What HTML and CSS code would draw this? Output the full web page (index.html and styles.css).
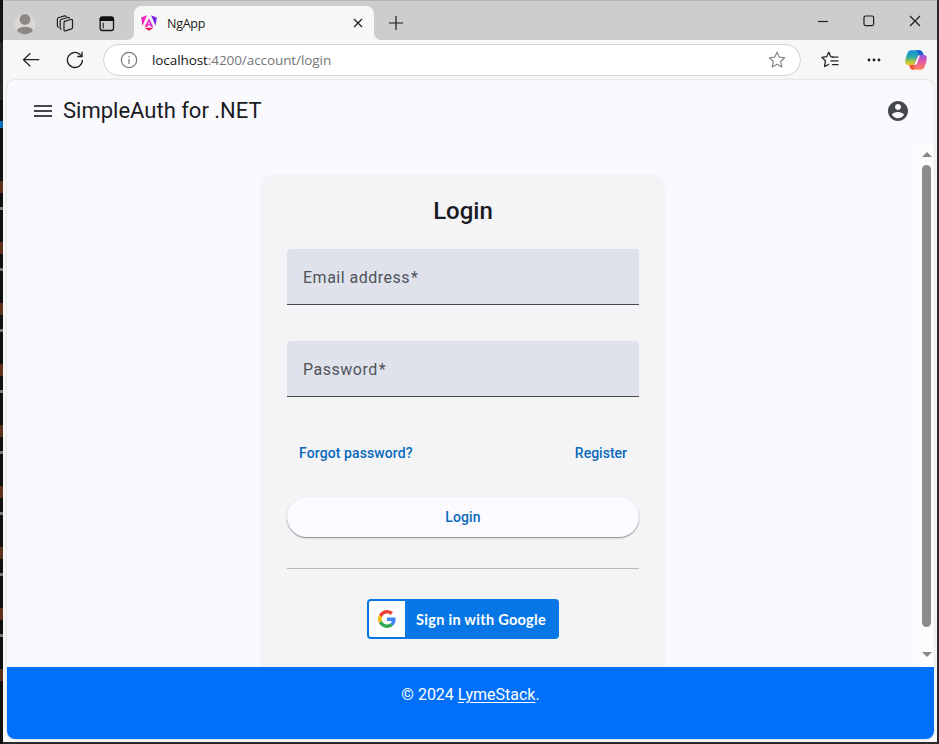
FILE: index.html
```html
<!DOCTYPE html>
<html lang="en">
<head>
<meta charset="utf-8">
<title>NgApp</title>
<link rel="stylesheet" href="styles.css">
</head>
<body>
<div class="backdrop">
<div class="edge" aria-hidden="true"></div>
<div class="window">
  <div class="titlebar">
    <div class="bar-left">
      <svg class="avatar" width="22" height="22" viewBox="0 0 22 22"><circle cx="11" cy="11" r="10.5" fill="#dad8d4"/><circle cx="11" cy="6.4" r="5.4" fill="#8c8783"/><path d="M3 17.5a8.3 5 0 0 1 16 0A10.5 10.5 0 0 1 3 17.5z" fill="#8c8783"/></svg>
      <svg class="spaces" width="18" height="18" viewBox="0 0 18 18" fill="none" stroke="#202020" stroke-width="1.2" stroke-linejoin="round" stroke-linecap="round"><path d="M8.200 6.400 15 4.500q1.500-.4 1.500 1v7q0 1-1 1.400l-6 2q-1.500.4-1.500-1V7.500q0-1 1-1.200zM5.200 14.200q-1-.3-1-1.300V5.800q0-1 1-1.300l6.500-2q1-.3 1.700.7M2.400 12.200q-1-.3-1-1.300V4q0-1 1-1.300L8.500.9q1-.3 1.600.5"/></svg>
      <svg class="tabs-icon" width="16" height="16" viewBox="0 0 16 16"><rect x="1.200" y="1.200" width="13.300" height="13.300" rx="2.200" fill="none" stroke="#161616" stroke-width="1.300"/><path d="M.6 5V3Q.6.600 3 .6h9.700q2.400 0 2.400 2.400v2z" fill="#111"/><path d="M4.300 6.800v5.700" stroke="#333" stroke-width="1.200"/></svg>
    </div>
    <div class="tab-slot"><div class="tab">
      <svg width="16" height="16" viewBox="0 0 16 16"><defs><linearGradient id="ng" x1="0" y1="0" x2="1" y2="0"><stop offset="0" stop-color="#f21667"/><stop offset=".4" stop-color="#ef24d8"/><stop offset="1" stop-color="#c034e4"/></linearGradient><linearGradient id="ngl" x1="0" y1="0" x2="0" y2="1"><stop offset="0" stop-color="#f52bd0"/><stop offset="1" stop-color="#f4129a"/></linearGradient></defs><path d="M.2 2.500 6 .2 1.400 10.800z" fill="url(#ngl)"/><path d="M10 .2l5.800 2.300-1.200 8.300z" fill="#7a26e8"/><path d="M8 3.600l4.300 8.100H9.600L9.200 10.500H6.800l-.4 1.200H3.700z" fill="url(#ng)"/><path d="M8 7l-.9 2.200h1.800z" fill="#f7f7f7"/><path d="M3.300 12.700h9.400L8 15.700z" fill="#f01059"/></svg>
      <span class="tab-title">NgApp</span>
      <svg class="tab-close" width="10" height="10" viewBox="0 0 10 10" stroke="#1c1c1c" stroke-width="1.200"><path d="M1 1l8 8M9 1 1 9"/></svg>
    </div></div>
    <div class="bar-right">
      <svg width="14" height="14" viewBox="0 0 14 14" stroke="#1c1c1c" stroke-width="1.200"><path d="M7 0v14M0 7h14"/></svg>
      <div class="controls">
        <svg width="12" height="12" viewBox="0 0 12 12" stroke="#1c1c1c" stroke-width="1.200"><path d="M1 6.500h10"/></svg>
        <svg width="12" height="12" viewBox="0 0 12 12" fill="none" stroke="#1c1c1c" stroke-width="1.200"><rect x="1" y="1" width="9.600" height="9.600" rx="1.500"/></svg>
        <svg width="12" height="12" viewBox="0 0 12 12" stroke="#1c1c1c" stroke-width="1.200"><path d="M1 1l10 10M11 1 1 11"/></svg>
      </div>
    </div>
  </div>
  <div class="toolbar">
    <svg class="back" width="18" height="16" viewBox="0 0 18 16" fill="none" stroke="#1d1d1d" stroke-width="1.200"><path d="M17.200 7.700H1.500M8.300 1.200 1.500 7.700l6.800 6.600"/></svg>
    <svg class="reload" width="18" height="18" viewBox="0 0 18 18" fill="none" stroke="#1d1d1d" stroke-width="1.300"><path d="M16.400 9A7.500 7.500 0 1 1 13.900 3.400L16 5.400"/><path d="M16 .8v4.700h-4.700"/></svg>
    <div class="address">
      <svg width="18" height="18" viewBox="0 0 18 18" fill="none" stroke="#777" stroke-width="1.200"><circle cx="9" cy="9" r="7.700"/><path d="M9 8v5M9 5v1.500"/></svg>
      <span class="url"><b>localhost</b>:4200/account/login</span>
      <svg class="star" width="18" height="18" viewBox="0 0 18 18" fill="none" stroke="#858585" stroke-width="1.200" stroke-linejoin="round"><path d="M9 1.200l2.300 5 5.400.6-4 3.700 1.100 5.400L9 13.200l-4.800 2.700 1.100-5.400-4-3.700 5.400-.6z"/></svg>
    </div>
    <svg class="favorites" width="18" height="18" viewBox="0 0 18 18" fill="none" stroke="#222" stroke-width="1.300" stroke-linejoin="round" stroke-linecap="round"><path d="M11.500 6 9.900 5.700 7.800 1.300 5.700 5.700.9 6.400l3.500 3.400-.8 5.700 4-2"/><path d="M11.500 6.100H17M10 9.900h7M11.500 13.700H17"/></svg>
    <svg class="dots" width="14" height="4" viewBox="0 0 14 4" fill="#1c1c1c"><circle cx="2" cy="2" r="1.400"/><circle cx="7" cy="2" r="1.400"/><circle cx="12" cy="2" r="1.400"/></svg>
    <svg class="copilot" width="22" height="20" viewBox="0 0 22 20"><defs><linearGradient id="ca" x1="0" y1="0" x2="0" y2="1"><stop offset="0" stop-color="#168ce0"/><stop offset=".45" stop-color="#25aaa7"/><stop offset=".75" stop-color="#a6c543"/><stop offset="1" stop-color="#f4c52c"/></linearGradient><linearGradient id="cb" x1="0" y1="0" x2="0" y2="1"><stop offset="0" stop-color="#9c50e8"/><stop offset=".5" stop-color="#e75c9b"/><stop offset="1" stop-color="#ff8555"/></linearGradient></defs><path d="M6 .2h8.500q2.500 0 3.300 2.800L18.500 5h-3.300q-2 0-2.800 2.500L10.600 13Q10 15 8 15H3Q0 15 .2 11.500C.5 8 2 4 3 2Q4 .2 6 .2z" fill="url(#ca)"/><path d="M16 19.800H7.500Q5.500 19.800 4.800 17L4.200 15h3q2.200 0 3-2.500L12 7q.7-2 2.600-2H19q3 0 2.800 3.500C21.500 12 20 16 19 18q-1 1.800-3 1.800z" fill="url(#cb)"/><path d="M11.500.2h3q2.500 0 3.300 2.800l.7 2h-3.300q-1.600 0-2.400-1.800z" fill="#1660ca"/><path d="M4.200 15h3q1.700 0 2.600 2l-1.500 2.800q-2.700.2-3.500-2.800z" fill="#ef5736"/><path d="M12.600 7.200q.7-2 2.400-2l-3 8.200q-.7 1.700-2.700 1.700z" fill="#fff"/></svg>
  </div>
  <div class="page">
    <header class="app-header">
      <svg width="18" height="12" viewBox="0 0 18 12" fill="#44474e"><path d="M0 0h18v2H0zM0 5h18v2H0zM0 10h18v2H0z"/></svg>
      <span class="brand">SimpleAuth for .NET</span>
      <svg class="account" width="24" height="24" viewBox="0 0 24 24" fill="#44474e"><path d="M12 2C6.480 2 2 6.480 2 12s4.480 10 10 10 10-4.480 10-10S17.520 2 12 2zm0 3c1.660 0 3 1.340 3 3s-1.340 3-3 3-3-1.340-3-3 1.340-3 3-3zm0 14.200c-2.500 0-4.710-1.280-6-3.220.03-1.990 4-3.080 6-3.080 1.990 0 5.970 1.090 6 3.080-1.290 1.940-3.500 3.220-6 3.220z"/></svg>
    </header>
    <div class="scroll-row">
      <main class="content">
        <form class="card">
          <h1>Login</h1>
          <div class="field">Email address<span>*</span></div>
          <div class="field">Password<span>*</span></div>
          <div class="links"><a class="forgot">Forgot password?</a><a>Register</a></div>
          <div class="submit">Login</div>
          <div class="divider"></div>
          <div class="google">
            <span class="google-logo"><svg width="18" height="18" viewBox="0 0 48 48"><path fill="#EA4335" d="M24 9.500c3.540 0 6.710 1.220 9.210 3.600l6.850-6.850C35.900 2.380 30.470 0 24 0 14.620 0 6.510 5.380 2.560 13.220l7.980 6.190C12.430 13.720 17.740 9.500 24 9.500z"/><path fill="#4285F4" d="M46.980 24.550c0-1.570-.15-3.090-.38-4.550H24v9.020h12.940c-.58 2.960-2.260 5.480-4.780 7.180l7.730 6c4.510-4.180 7.090-10.360 7.090-17.650z"/><path fill="#FBBC05" d="M10.530 28.590c-.48-1.450-.76-2.990-.76-4.590s.27-3.140.76-4.590l-7.980-6.190C.92 16.460 0 20.120 0 24c0 3.880.92 7.540 2.560 10.780l7.970-6.190z"/><path fill="#34A853" d="M24 48c6.480 0 11.930-2.130 15.890-5.810l-7.730-6c-2.150 1.450-4.920 2.300-8.160 2.300-6.260 0-11.570-4.220-13.470-9.910l-7.980 6.190C6.510 42.620 14.620 48 24 48z"/></svg></span>
            <span class="google-text">Sign in with Google</span>
          </div>
        </form>
      </main>
      <div class="scrollbar"><i class="up"></i><i class="thumb"></i><i class="down"></i></div>
    </div>
    <footer class="footer">© 2024&nbsp;<u>LymeStack</u>.</footer>
  </div>
</div>
</div>
</body>
</html>
```
FILE: styles.css
```css
* { box-sizing: border-box; }
body { margin: 0; font-family: Roboto, sans-serif; overflow: hidden; }
svg { display: block; flex: none; }
.backdrop { width: 939px; height: 744px; display: flex; background: #29292b; }
.edge {
  width: 3px;
  background:
    linear-gradient(#0e6dbd, #0e6dbd) 0 121px / 3px 7px no-repeat,
    linear-gradient(#252525, #252525) 0 42px / 3px 58px no-repeat,
    repeating-linear-gradient(#111 0 14px, #5e301b 14px 26px, #111 26px 40px, #777b80 40px 43px, #111 43px 61px) 0 167px / 3px 520px no-repeat,
    #111;
}
.window { width: 934px; height: 742px; display: flex; flex-direction: column; background: #f7f7f7; }

.titlebar { height: 40px; display: flex; border-top: 1px solid #b5b5b5; }
.bar-left { width: 131px; background: #cdcdcd; border-radius: 0 0 7px 0; display: flex; align-items: center; padding: 6px 0 0 11px; }
.spaces { margin-left: 20px; }
.tabs-icon { margin-left: 25px; }
.tab-slot { width: 240px; background: #cdcdcd; padding-top: 5px; }
.tab { height: 34px; background: #f7f7f7; border-radius: 8px 8px 0 0; display: flex; align-items: center; padding: 0 11px 0 7px; }
.tab-title { font: 12.5px "Open Sans", sans-serif; color: #1c1c1c; margin-left: 10px; letter-spacing: -.25px; }
.tab-close { margin-left: auto; }
.bar-right { flex: 1; background: #cdcdcd; border-radius: 0 0 0 7px; display: flex; align-items: center; justify-content: space-between; padding: 4px 16px 0 15px; }
.controls { display: flex; gap: 34px; padding-bottom: 4px; }

.toolbar { height: 40px; display: flex; align-items: center; padding-left: 19px; }
.reload { margin-left: 26px; }
.address { width: 698px; height: 32px; margin-left: 19px; display: flex; align-items: center; background: #fff; border: 1px solid #d4d4d4; border-radius: 16px; padding: 0 14px 0 16px; }
.url { font: 13.500px "Open Sans", sans-serif; color: #767676; margin-left: 14px; letter-spacing: -.08px; }
.url b { font-weight: 400; color: #151515; }
.star { margin-left: auto; }
.favorites { margin-left: 20px; }
.dots { margin-left: 28px; }
.copilot { margin-left: 24px; }

.page { width: 927px; height: 659px; margin-left: 4px; display: flex; flex-direction: column; background: #faf9fd; border-radius: 8px; overflow: hidden; box-shadow: 0 0 2px rgba(0,0,0,.22); }
.app-header { height: 64px; display: flex; align-items: center; padding: 0 24px 2px 27px; color: #1a1b1f; }
.brand { font-size: 22px; line-height: 28px; margin-left: 11px; }
.account { margin-left: auto; }
.scroll-row { height: 523px; display: flex; }
.content { width: 912px; padding-top: 32px; overflow: hidden; }
.card { width: 400px; height: 520px; margin: 0 auto; padding: 15px 24px; background: #f4f3f6; border-radius: 12px; box-shadow: 0 0 5px rgba(0,0,0,.07); }
.card h1 { margin: 0 0 18px; font-size: 24px; line-height: 40px; font-weight: 500; text-align: center; color: #1a1b1f; }
.field { height: 56px; margin-bottom: 36px; padding: 1px 16px 0; line-height: 56px; font-size: 16px; letter-spacing: .5px; color: #50535a; background: #dfe2eb; border-bottom: 1px solid #44474e; border-radius: 4px 4px 0 0; }
.field span { margin-left: 1px; }
.links { display: flex; justify-content: space-between; padding: 0 12px; height: 40px; line-height: 40px; color: #0a6abb; font-size: 14px; font-weight: 500; }
.forgot { letter-spacing: .1px; }
.submit { margin-top: 24px; height: 40px; line-height: 40px; border-radius: 20px; text-align: center; font-size: 14px; font-weight: 500; letter-spacing: .1px; color: #0a6abb; background: #fbfafe; box-shadow: 0 1px 1.500px rgba(0,0,0,.45); }
.divider { margin: 31px 0 30px; border-top: 1px solid #b9b9bc; }
.google { width: 192px; height: 40px; margin: 0 auto; display: flex; background: #0877e6; border: 2px solid #0877e6; border-radius: 4px; color: #fff; }
.google-logo { width: 36px; background: #fff; border-radius: 2px 0 0 2px; display: flex; align-items: center; justify-content: center; }
.google-text { flex: 1; text-align: center; white-space: nowrap; font: 700 14.500px/37px Lato, sans-serif; letter-spacing: .28px; }
.scrollbar { width: 15px; background: #fcfcfd; display: flex; flex-direction: column; align-items: center; padding-top: 8px; }
.up { border: 5px solid transparent; border-top: 0; border-bottom: 5px solid #888; }
.thumb { width: 9px; height: 462px; margin: 8px 0 25px; border-radius: 5px; background: #8b8b8b; }
.down { border: 5px solid transparent; border-bottom: 0; border-top: 5px solid #888; }
.footer { height: 72px; padding-top: 18px; display: flex; justify-content: center; background: #0070fb; color: #fff; font-size: 16px; line-height: 20px; }
.footer u { text-underline-offset: 2px; }
```
